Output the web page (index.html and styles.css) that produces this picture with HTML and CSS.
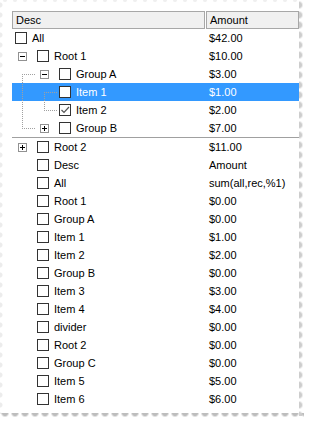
FILE: index.html
```html
<!DOCTYPE html>
<html lang="en">
<head>
  <meta charset="UTF-8">
  <meta name="viewport" content="width=device-width, initial-scale=1.0">
  <title>Tree Grid</title>
  <link rel="stylesheet" href="styles.css">
</head>
<body>
  <div class="frame">
    <div class="grid">
      <div class="head">
        <div class="hcell desc">Desc</div>
        <div class="hcell amt">Amount</div>
      </div>

      <div class="locked">
        <div class="row">
          <div class="cell desc top"><span class="chk"></span><span class="txt">All</span></div>
          <div class="cell amt">$42.00</div>
        </div>
        <div class="row">
          <div class="cell desc">
            <span class="exp"><svg width="9" height="9" viewBox="0 0 9 9"><rect x="0.5" y="0.5" width="8" height="8" fill="#fff" stroke="#919191"/><path d="M2 4.5h5" stroke="#000"/></svg></span>
            <span class="chk"></span><span class="txt">Root 1</span>
          </div>
          <div class="cell amt">$10.00</div>
        </div>
        <div class="row">
          <div class="cell desc lvl2">
            <span class="exp"><svg width="9" height="9" viewBox="0 0 9 9"><rect x="0.5" y="0.5" width="8" height="8" fill="#fff" stroke="#919191"/><path d="M2 4.5h5" stroke="#000"/></svg></span>
            <span class="chk"></span><span class="txt">Group A</span>
          </div>
          <div class="cell amt">$3.00</div>
        </div>
        <div class="row selected">
          <div class="cell desc lvl2"><span class="noexp"></span><span class="chk"></span><span class="txt">Item 1</span></div>
          <div class="cell amt">$1.00</div>
        </div>
        <div class="row">
          <div class="cell desc lvl2">
            <span class="noexp"></span>
            <span class="chk"><svg width="10" height="10" viewBox="0 0 10 10"><path d="M1.5 5l2.5 2.5 5-5.5" fill="none" stroke="#555" stroke-width="1.2"/></svg></span>
            <span class="txt">Item 2</span>
          </div>
          <div class="cell amt">$2.00</div>
        </div>
        <div class="row">
          <div class="cell desc lvl2">
            <span class="exp"><svg width="9" height="9" viewBox="0 0 9 9"><rect x="0.5" y="0.5" width="8" height="8" fill="#fff" stroke="#919191"/><path d="M2 4.5h5M4.5 2v5" stroke="#000"/></svg></span>
            <span class="chk"></span><span class="txt">Group B</span>
          </div>
          <div class="cell amt">$7.00</div>
        </div>

        <!-- tree connector lines -->
        <svg class="lines" width="60" height="108" viewBox="0 0 60 108">
          <g stroke="#a0a0a0" stroke-dasharray="1 1" fill="none">
            <path d="M10.5 45v55M10 45.5h14M10 99.5h14"/>
            <path d="M32.5 63v19M32 63.5h13M32 81.5h13"/>
          </g>
        </svg>
      </div>

      <div class="rows">
        <div class="row">
          <div class="cell desc">
            <span class="exp"><svg width="9" height="9" viewBox="0 0 9 9"><rect x="0.5" y="0.5" width="8" height="8" fill="#fff" stroke="#919191"/><path d="M2 4.5h5M4.5 2v5" stroke="#000"/></svg></span>
            <span class="chk"></span><span class="txt">Root 2</span>
          </div>
          <div class="cell amt">$11.00</div>
        </div>
        <div class="row"><div class="cell desc"><span class="noexp"></span><span class="chk"></span><span class="txt">Desc</span></div><div class="cell amt">Amount</div></div>
        <div class="row"><div class="cell desc"><span class="noexp"></span><span class="chk"></span><span class="txt">All</span></div><div class="cell amt">sum(all,rec,%1)</div></div>
        <div class="row"><div class="cell desc"><span class="noexp"></span><span class="chk"></span><span class="txt">Root 1</span></div><div class="cell amt">$0.00</div></div>
        <div class="row"><div class="cell desc"><span class="noexp"></span><span class="chk"></span><span class="txt">Group A</span></div><div class="cell amt">$0.00</div></div>
        <div class="row"><div class="cell desc"><span class="noexp"></span><span class="chk"></span><span class="txt">Item 1</span></div><div class="cell amt">$1.00</div></div>
        <div class="row"><div class="cell desc"><span class="noexp"></span><span class="chk"></span><span class="txt">Item 2</span></div><div class="cell amt">$2.00</div></div>
        <div class="row"><div class="cell desc"><span class="noexp"></span><span class="chk"></span><span class="txt">Group B</span></div><div class="cell amt">$0.00</div></div>
        <div class="row"><div class="cell desc"><span class="noexp"></span><span class="chk"></span><span class="txt">Item 3</span></div><div class="cell amt">$3.00</div></div>
        <div class="row"><div class="cell desc"><span class="noexp"></span><span class="chk"></span><span class="txt">Item 4</span></div><div class="cell amt">$4.00</div></div>
        <div class="row"><div class="cell desc"><span class="noexp"></span><span class="chk"></span><span class="txt">divider</span></div><div class="cell amt">$0.00</div></div>
        <div class="row"><div class="cell desc"><span class="noexp"></span><span class="chk"></span><span class="txt">Root 2</span></div><div class="cell amt">$0.00</div></div>
        <div class="row"><div class="cell desc"><span class="noexp"></span><span class="chk"></span><span class="txt">Group C</span></div><div class="cell amt">$0.00</div></div>
        <div class="row"><div class="cell desc"><span class="noexp"></span><span class="chk"></span><span class="txt">Item 5</span></div><div class="cell amt">$5.00</div></div>
        <div class="row"><div class="cell desc"><span class="noexp"></span><span class="chk"></span><span class="txt">Item 6</span></div><div class="cell amt">$6.00</div></div>
      </div>
    </div>
  </div>
</body>
</html>
```

FILE: styles.css
```css
html, body { margin: 0; padding: 0; background: #fff; }
body { font-family: "Liberation Sans", Arial, sans-serif; font-size: 11px; color: #000; }

.frame {
  position: relative;
  width: 309px;
  height: 426px;
  padding: 11px 0 0 12px;
  box-sizing: border-box;
  overflow: hidden;
}
/* torn paper edges */
.frame::before {
  content: '';
  position: absolute;
  left: 299px;
  top: 0;
  width: 6px;
  height: 416px;
  background-image: radial-gradient(circle at 0 5px, #cdcdcd 0 2.5px, rgba(205,205,205,0.4) 3.5px, transparent 4.5px);
  background-size: 6px 10px;
}
.frame::after {
  content: '';
  position: absolute;
  left: 0;
  top: 413px;
  width: 304px;
  height: 8px;
  background-image: radial-gradient(circle at 5px 0, #bdbdbd 0 2.5px, rgba(189,189,189,0.45) 3.5px, transparent 4.5px);
  background-size: 10px 8px;
}
.grid::before {
  content: '';
  position: absolute;
  left: 0;
  top: 0;
  width: 5px;
  height: 414px;
  background-image: radial-gradient(circle at 0 5px, #ececec 0 2px, transparent 3px);
  background-size: 5px 10px;
}
.grid::after {
  content: '';
  position: absolute;
  left: 0;
  top: 0;
  width: 298px;
  height: 4px;
  background-image: radial-gradient(circle at 5px 0, #efefef 0 1.5px, transparent 2.5px);
  background-size: 10px 4px;
}

.grid { width: 287px; }

.head { display: flex; gap: 1px; height: 18px; }
.hcell {
  box-sizing: border-box;
  height: 18px;
  background: #f0f0f0;
  border: 1px solid #a7a7a7;
  padding: 1px 0 0 3px;
  line-height: 14px;
}
.hcell.desc { width: 193px; }
.hcell.amt { flex: 1; }

.locked { position: relative; border-bottom: 1px solid #a0a0a0; }
.lines { position: absolute; left: 0; top: 0; }

.row { display: flex; height: 18px; line-height: 18px; }
.row.selected { background: #3399ff; color: #fff; }

.cell { box-sizing: border-box; white-space: nowrap; }
.cell.desc { width: 194px; display: flex; align-items: center; }
.cell.desc.top { padding-left: 3px; }
.cell.desc.lvl2 { padding-left: 22px; }
.cell.amt { flex: 1; padding-left: 3px; }

.exp { display: flex; width: 9px; height: 9px; margin: 1px 10px 0 6px; }
.noexp { width: 25px; }

.chk {
  box-sizing: border-box;
  width: 12px;
  height: 12px;
  border: 1px solid #333;
  background: #fff;
  display: flex;
  align-items: center;
  justify-content: center;
  flex: none;
}
.txt { margin-left: 5px; }
```
